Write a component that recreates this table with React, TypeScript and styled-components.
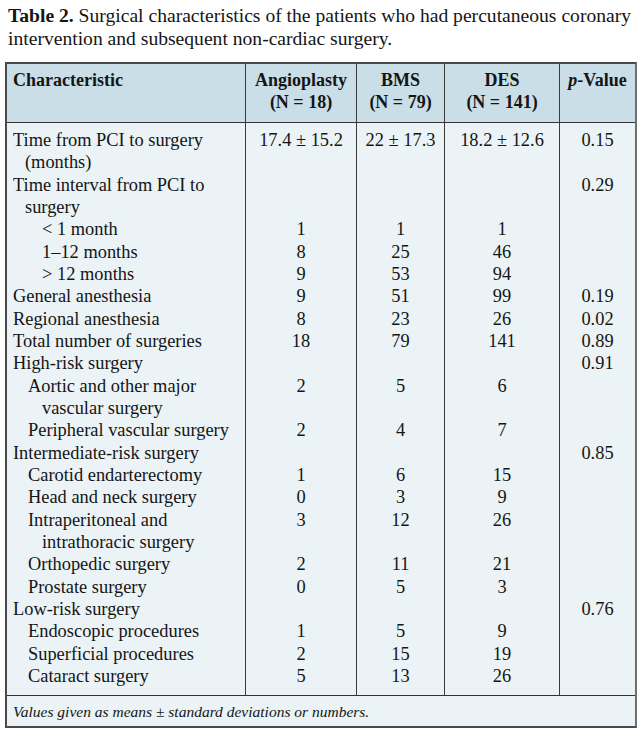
import React from "react";
import styled, { createGlobalStyle } from "styled-components";

const GlobalStyle = createGlobalStyle`
  * { box-sizing: border-box; }
  body {
    margin: 0;
    background: #ffffff;
    font-family: "Liberation Serif", "Times New Roman", serif;
    color: #151515;
  }
`;

const Page = styled.div`
  width: 642px;
  padding: 4px 0 0 5px;
`;

const Title = styled.div`
  padding: 0 0 0 3px;
  font-size: 19.6px;
  line-height: 23px;
  margin-bottom: 12px;
  white-space: nowrap;

  b {
    font-weight: 700;
  }
`;

const Table = styled.table`
  width: 632px;
  table-layout: fixed;
  border-collapse: separate;
  border-spacing: 0;
  border: 2px solid #4a4a4a;
  border-right-color: #6f6f6f;
  background: #ebf3f6;
  font-size: 18.4px;
`;

const HeadCell = styled.th<{ $left?: boolean }>`
  background: #c9dee6;
  font-weight: 700;
  font-size: 18px;
  line-height: 22px;
  padding: 5px 4px 9px ${(p) => (p.$left ? "6px" : "4px")};
  text-align: ${(p) => (p.$left ? "left" : "center")};
  vertical-align: top;
  border-bottom: 1.5px solid #333;
  border-right: 1.5px solid #3c3c3c;

  &:last-child {
    border-right: none;
  }
`;

const Row = styled.tr`
  &:first-child td {
    padding-top: 6px;
  }
  &:last-child td {
    padding-bottom: 8px;
  }
`;

const Cell = styled.td<{ $left?: boolean }>`
  line-height: 22.33px;
  padding: 0 2px;
  text-align: ${(p) => (p.$left ? "left" : "center")};
  vertical-align: top;
  border-right: 1.5px solid #3c3c3c;
  white-space: nowrap;

  &:last-child {
    border-right: none;
  }
`;

const Line = styled.div<{ $indent: number }>`
  padding-left: ${(p) => p.$indent}px;
`;

const NoteCell = styled.td`
  border-top: 1.5px solid #333;
  padding: 5px 6px 3px;
  font-size: 15.5px;
  font-style: italic;
  line-height: 22px;
`;

type DataRow = { label: string[]; level: number; v: string[] };

const rows: DataRow[] = [
  { label: ["Time from PCI to surgery", "(months)"], level: 0, v: ["17.4 ± 15.2", "22 ± 17.3", "18.2 ± 12.6", "0.15"] },
  { label: ["Time interval from PCI to", "surgery"], level: 0, v: ["", "", "", "0.29"] },
  { label: ["< 1 month"], level: 2, v: ["1", "1", "1", ""] },
  { label: ["1–12 months"], level: 2, v: ["8", "25", "46", ""] },
  { label: ["> 12 months"], level: 2, v: ["9", "53", "94", ""] },
  { label: ["General anesthesia"], level: 0, v: ["9", "51", "99", "0.19"] },
  { label: ["Regional anesthesia"], level: 0, v: ["8", "23", "26", "0.02"] },
  { label: ["Total number of surgeries"], level: 0, v: ["18", "79", "141", "0.89"] },
  { label: ["High-risk surgery"], level: 0, v: ["", "", "", "0.91"] },
  { label: ["Aortic and other major", "vascular surgery"], level: 1, v: ["2", "5", "6", ""] },
  { label: ["Peripheral vascular surgery"], level: 1, v: ["2", "4", "7", ""] },
  { label: ["Intermediate-risk surgery"], level: 0, v: ["", "", "", "0.85"] },
  { label: ["Carotid endarterectomy"], level: 1, v: ["1", "6", "15", ""] },
  { label: ["Head and neck surgery"], level: 1, v: ["0", "3", "9", ""] },
  { label: ["Intraperitoneal and", "intrathoracic surgery"], level: 1, v: ["3", "12", "26", ""] },
  { label: ["Orthopedic surgery"], level: 1, v: ["2", "11", "21", ""] },
  { label: ["Prostate surgery"], level: 1, v: ["0", "5", "3", ""] },
  { label: ["Low-risk surgery"], level: 0, v: ["", "", "", "0.76"] },
  { label: ["Endoscopic procedures"], level: 1, v: ["1", "5", "9", ""] },
  { label: ["Superficial procedures"], level: 1, v: ["2", "15", "19", ""] },
  { label: ["Cataract surgery"], level: 1, v: ["5", "13", "26", ""] },
];

// first-line indent per level, continuation lines hang further in
const firstIndent = [4, 19, 33];
const hangIndent = [16, 33, 33];

export default function App() {
  return (
    <Page>
      <GlobalStyle />
      <Title>
        <b>Table 2.</b> Surgical characteristics of the patients who had percutaneous coronary
        <br />
        intervention and subsequent non-cardiac surgery.
      </Title>
      <Table>
        <colgroup>
          <col style={{ width: 239 }} />
          <col style={{ width: 111 }} />
          <col style={{ width: 88 }} />
          <col style={{ width: 115 }} />
          <col style={{ width: 75 }} />
        </colgroup>
        <thead>
          <tr>
            <HeadCell $left>Characteristic</HeadCell>
            <HeadCell>
              Angioplasty
              <br />
              (N = 18)
            </HeadCell>
            <HeadCell>
              BMS
              <br />
              (N = 79)
            </HeadCell>
            <HeadCell>
              DES
              <br />
              (N = 141)
            </HeadCell>
            <HeadCell>
              <i>p</i>-Value
            </HeadCell>
          </tr>
        </thead>
        <tbody>
          {rows.map((r, i) => (
            <Row key={i}>
              <Cell $left>
                {r.label.map((t, j) => (
                  <Line key={j} $indent={j === 0 ? firstIndent[r.level] : hangIndent[r.level]}>
                    {t}
                  </Line>
                ))}
              </Cell>
              {r.v.map((val, j) => (
                <Cell key={j}>{val}</Cell>
              ))}
            </Row>
          ))}
        </tbody>
        <tfoot>
          <tr>
            <NoteCell colSpan={5}>Values given as means ± standard deviations or numbers.</NoteCell>
          </tr>
        </tfoot>
      </Table>
    </Page>
  );
}
